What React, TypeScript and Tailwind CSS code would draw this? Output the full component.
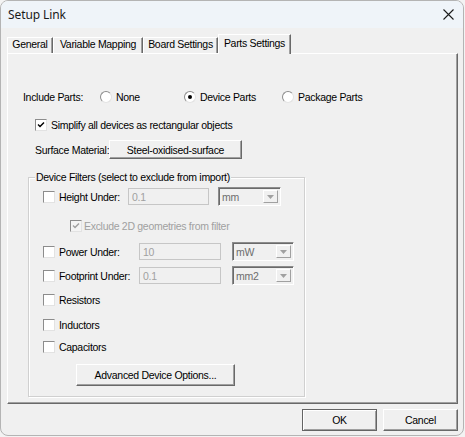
import React from 'react';

function Check({ checked, disabled }: { checked?: boolean; disabled?: boolean }) {
  return (
    <div
      className={`w-[12px] h-[12px] shrink-0 border border-t-[#8c8c8c] border-l-[#8c8c8c] border-r-[#e2e2e2] border-b-[#e2e2e2] flex items-center justify-center ${
        disabled ? 'bg-[#f4f4f4]' : 'bg-white'
      }`}
    >
      {checked && (
        <svg width="8" height="8" viewBox="0 0 8 8">
          <path d="M1 3.6 L3 5.6 L7 1.4" fill="none" stroke={disabled ? '#a0a0a0' : '#000'} strokeWidth="1.4" />
        </svg>
      )}
    </div>
  );
}

function Radio({ on }: { on?: boolean }) {
  return (
    <div className="w-[12px] h-[12px] shrink-0 rounded-full border border-t-[#8c8c8c] border-l-[#8c8c8c] border-r-[#e2e2e2] border-b-[#e2e2e2] bg-white flex items-center justify-center">
      {on && <div className="w-[4px] h-[4px] rounded-full bg-black" />}
    </div>
  );
}

function Select({ value, w }: { value: string; w: string }) {
  return (
    <div
      className={`${w} h-[19px] shrink-0 border border-t-[#8c8c8c] border-l-[#8c8c8c] border-r-white border-b-white shadow-[inset_1px_1px_0_#6a6a6a] bg-[#f0f0f0] flex items-center justify-between pl-[3px] pr-[2px] text-[#6d6d6d]`}
    >
      <span>{value}</span>
      <div className="w-[15px] h-[13px] flex items-center justify-center bg-[#f0f0f0] border border-t-white border-l-white border-r-[#a0a0a0] border-b-[#a0a0a0]">
        <svg width="7" height="4" viewBox="0 0 7 4">
          <path d="M0 0 H7 L3.5 4 Z" fill="#a0a0a0" />
        </svg>
      </div>
    </div>
  );
}

function Input({ value, w }: { value: string; w: string }) {
  return (
    <div className={`${w} h-[17px] shrink-0 border border-[#c6c6c6] bg-[#f0f0f0] flex items-center pl-[3px] text-[#a0a0a0]`}>
      {value}
    </div>
  );
}

const btn =
  'flex items-center justify-center shrink-0 bg-[#f0f0f0] border border-t-white border-l-white border-r-[#696969] border-b-[#696969] shadow-[inset_-1px_-1px_0_#a0a0a0]';

export default function App() {
  return (
    <div className="w-[465px] h-[437px] bg-[#f3f3f3] whitespace-nowrap font-['Liberation_Sans',Arial,sans-serif] text-[10.5px] tracking-[-0.3px] leading-[14px] text-black">
      <div className="w-[464px] h-[436px] rounded-[8px] border border-[#b4b4b4] bg-[#f0f0f0] overflow-hidden flex flex-col">
        {/* Title bar */}
        <div className="h-[27px] shrink-0 bg-[#eff4f9] flex items-center justify-between pl-[7px] pr-[9px]">
          <span className="font-['Noto_Sans',sans-serif] text-[12px] tracking-[-0.1px] text-[#1a1a1a]">Setup Link</span>
          <svg width="11" height="11" viewBox="0 0 11 11">
            <path d="M0.5 0.5 L10.5 10.5 M10.5 0.5 L0.5 10.5" stroke="#1b1b1b" strokeWidth="1.1" />
          </svg>
        </div>

        {/* Tabs */}
        <div className="mt-[6px] h-[19px] pl-[6px] flex items-end">
          <div className="w-[46px] h-[16px] leading-[12px] flex justify-center border border-t-white border-l-white border-b-0 border-r-[#696969] shadow-[inset_-1px_0_0_#a0a0a0]">
            General
          </div>
          <div className="w-[90px] h-[16px] leading-[12px] flex justify-center border border-t-white border-l-white border-b-0 border-r-[#696969] shadow-[inset_-1px_0_0_#a0a0a0]">
            Variable Mapping
          </div>
          <div className="w-[75px] h-[16px] leading-[12px] flex justify-center border border-t-white border-l-white border-b-0 border-r-[#696969] shadow-[inset_-1px_0_0_#a0a0a0]">
            Board Settings
          </div>
          <div className="relative z-10 -mb-px w-[73px] h-[20px] leading-[12px] pt-[2px] flex justify-center bg-[#f0f0f0] border border-t-white border-l-white border-b-0 border-r-[#696969] shadow-[inset_-1px_0_0_#a0a0a0]">
            Parts Settings
          </div>
        </div>

        {/* Panel */}
        <div className="ml-[6px] w-[451px] h-[351px] shrink-0 border border-t-white border-l-white border-r-[#696969] border-b-[#696969] shadow-[inset_-1px_-1px_0_#a0a0a0] flex flex-col">
          {/* Include Parts */}
          <div className="mt-[36px] h-[14px] pl-[15px] flex items-center">
            <span className="w-[77px] shrink-0">Include Parts:</span>
            <div className="w-[84px] shrink-0 flex items-center gap-[4px]">
              <Radio />
              <span>None</span>
            </div>
            <div className="w-[98px] shrink-0 flex items-center gap-[4px]">
              <Radio on />
              <span>Device Parts</span>
            </div>
            <div className="flex items-center gap-[4px]">
              <Radio />
              <span>Package Parts</span>
            </div>
          </div>

          {/* Simplify */}
          <div className="mt-[14px] h-[14px] pl-[27px] flex items-center gap-[4px]">
            <Check checked />
            <span>Simplify all devices as rectangular objects</span>
          </div>

          {/* Surface material */}
          <div className="mt-[8px] h-[19px] pl-[27px] flex items-center">
            <span className="w-[74px] shrink-0">Surface Material:</span>
            <div className={`${btn} w-[133px] h-[19px]`}>Steel-oxidised-surface</div>
          </div>

          {/* Device filters group */}
          <div className="relative mt-[18px] ml-[20px] w-[277px] border border-[#d0d0d0] shadow-[inset_1px_1px_0_white,1px_1px_0_white] pb-[10px] flex flex-col">
            <span className="absolute left-[6px] top-[-8px] px-[1px] bg-[#f0f0f0]">
              Device Filters (select to exclude from import)
            </span>

            <div className="mt-[9px] h-[19px] pl-[14px] flex items-center">
              <Check />
              <span className="ml-[4px] w-[69px] shrink-0">Height Under:</span>
              <Input value="0.1" w="w-[81px]" />
              <div className="ml-[9px]">
                <Select value="mm" w="w-[63px]" />
              </div>
            </div>

            <div className="mt-[13px] h-[14px] pl-[41px] flex items-center gap-[2px]">
              <Check checked disabled />
              <span className="text-[#a0a0a0]">Exclude 2D geometries from filter</span>
            </div>

            <div className="mt-[9px] h-[19px] pl-[14px] flex items-center">
              <Check />
              <span className="ml-[4px] w-[80px] shrink-0">Power Under:</span>
              <Input value="10" w="w-[82px]" />
              <div className="ml-[11px]">
                <Select value="mW" w="w-[62px]" />
              </div>
            </div>

            <div className="mt-[5px] h-[19px] pl-[14px] flex items-center">
              <Check />
              <span className="ml-[4px] w-[80px] shrink-0">Footprint Under:</span>
              <Input value="0.1" w="w-[82px]" />
              <div className="ml-[11px]">
                <Select value="mm2" w="w-[62px]" />
              </div>
            </div>

            <div className="mt-[8px] h-[14px] pl-[14px] flex items-center gap-[4px]">
              <Check />
              <span>Resistors</span>
            </div>
            <div className="mt-[11px] h-[14px] pl-[14px] flex items-center gap-[4px]">
              <Check />
              <span>Inductors</span>
            </div>
            <div className="mt-[8px] h-[14px] pl-[14px] flex items-center gap-[4px]">
              <Check />
              <span>Capacitors</span>
            </div>

            <div className={`${btn} mt-[10px] ml-[47px] w-[159px] h-[22px]`}>Advanced Device Options...</div>
          </div>
        </div>

        {/* Bottom buttons */}
        <div className="mt-[5px] pr-[5px] flex justify-end gap-[6px]">
          <div className="w-[75px] h-[22px] flex items-center justify-center bg-[#f0f0f0] border border-[#646464] shadow-[inset_1px_1px_0_white,inset_-1px_-1px_0_#a0a0a0]">
            OK
          </div>
          <div className={`${btn} w-[75px] h-[22px]`}>Cancel</div>
        </div>
      </div>
    </div>
  );
}
